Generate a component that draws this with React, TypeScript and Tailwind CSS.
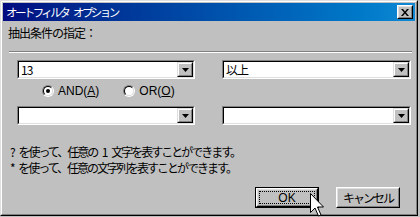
import React from "react";

// ─── Classic Win9x pieces ────────────────────────────────────────────────────

function DropArrow() {
  return (
    <div className="flex h-full w-[16px] items-center justify-center border border-t-[#dfdfdf] border-l-[#dfdfdf] border-r-black border-b-black bg-[#c0c0c0]">
      <div className="flex h-full w-full items-center justify-center border border-t-white border-l-white border-r-[#808080] border-b-[#808080]">
        <svg width="7" height="4" viewBox="0 0 7 4">
          <path d="M0 0h7L3.5 4z" fill="#000" />
        </svg>
      </div>
    </div>
  );
}

function Combo({ value, width }: { value?: string; width: string }) {
  return (
    <div className={`${width} h-[19px] border border-t-[#808080] border-l-[#808080] border-r-white border-b-white`}>
      <div className="flex h-full items-stretch border border-t-black border-l-black border-r-[#dfdfdf] border-b-[#dfdfdf] bg-white">
        <span className="flex-1 pl-[2px] text-[12px] leading-[15px] tracking-[-1px]">{value}</span>
        <DropArrow />
      </div>
    </div>
  );
}

function Radio({ checked, label, mnemonic }: { checked?: boolean; label: string; mnemonic: string }) {
  return (
    <div className="flex items-center gap-[4px]">
      <div className="flex size-[12px] items-center justify-center rounded-full border border-t-[#808080] border-l-[#808080] border-r-white border-b-white">
        <div className="flex size-[10px] items-center justify-center rounded-full border border-t-black border-l-black border-r-[#dfdfdf] border-b-[#dfdfdf] bg-white">
          {checked && <div className="size-[4px] rounded-full bg-black" />}
        </div>
      </div>
      <span className="text-[12px] leading-[12px] font-['Liberation_Sans',sans-serif]">
        {label}(<span className="underline">{mnemonic}</span>)
      </span>
    </div>
  );
}

// ─── Page ─────────────────────────────────────────────────────────────────────

export default function App() {
  return (
    <div className="relative h-[217px] w-[420px] overflow-hidden bg-[#c0c0c0] font-['Noto_Sans_CJK_JP',sans-serif] text-[12px] text-black">
      <div className="h-[216px] w-[418px] border border-t-[#dfdfdf] border-l-[#dfdfdf] border-r-black border-b-black">
        <div className="flex h-full flex-col border border-t-white border-l-white border-r-[#808080] border-b-[#808080] p-px">
          {/* Title bar */}
          <div className="flex h-[18px] items-center justify-between bg-gradient-to-r from-[#000a80] to-[#1088d4] pl-[3px] pr-[2px]">
            <span className="text-[11.5px] leading-[14px] tracking-[-2.6px] [word-spacing:5px] text-white">オートフィルタ オプション</span>
            <div className="h-[14px] w-[16px] border border-t-white border-l-white border-r-black border-b-black bg-[#c0c0c0]">
              <div className="flex h-full w-full items-center justify-center border border-t-[#dfdfdf] border-l-[#dfdfdf] border-r-[#808080] border-b-[#808080]">
                <svg width="8" height="7" viewBox="0 0 8 7">
                  <path d="M0 0h2l2 2.5L6 0h2L5 3.5 8 7H6L4 4.5 2 7H0l3-3.5z" fill="#000" />
                </svg>
              </div>
            </div>
          </div>

          {/* Body */}
          <div className="flex flex-1 flex-col">
            <p className="mt-[5px] pl-[5px] leading-[14px] tracking-[-1px]">抽出条件の指定：</p>

            <div className="mt-[11px] ml-[6px] w-[403px] border-t border-b border-t-[#808080] border-b-white" />

            <div className="mt-[7px] ml-[14px] flex gap-[27px]">
              <Combo value="13" width="w-[178px]" />
              <Combo value="以上" width="w-[189px]" />
            </div>

            <div className="mt-[6px] ml-[39px] flex h-[12px] items-center gap-[24px]">
              <Radio checked label="AND" mnemonic="A" />
              <Radio label="OR" mnemonic="O" />
            </div>

            <div className="mt-[9px] ml-[14px] flex gap-[27px]">
              <Combo width="w-[178px]" />
              <Combo width="w-[189px]" />
            </div>

            <div className="mt-[19px] pl-[7px] leading-[16px] tracking-[-2px] [word-spacing:4px]">
              <p>? を使って、任意の 1 文字を表すことができます。</p>
              <p>* を使って、任意の文字列を表すことができます。</p>
            </div>

            <div className="mt-[11px] ml-[252px] flex gap-[17px]">
              {/* Default button */}
              <div className="h-[21px] w-[64px] border border-black">
                <div className="h-full w-full border border-t-white border-l-white border-r-black border-b-black">
                  <div className="flex h-full w-full items-center justify-center border border-t-[#dfdfdf] border-l-[#dfdfdf] border-r-[#808080] border-b-[#808080] p-px">
                    <div className="flex h-full w-full items-center justify-center border border-dotted border-black font-['Liberation_Sans',sans-serif] leading-none">
                      OK
                    </div>
                  </div>
                </div>
              </div>
              <div className="h-[21px] w-[64px] border border-t-white border-l-white border-r-black border-b-black">
                <div className="flex h-full w-full items-center justify-center border border-t-[#dfdfdf] border-l-[#dfdfdf] border-r-[#808080] border-b-[#808080] leading-none tracking-[-2px]">
                  キャンセル
                </div>
              </div>
            </div>
          </div>
        </div>
      </div>

      {/* Mouse pointer */}
      <svg className="absolute left-[310px] top-[193px]" width="14" height="24" viewBox="0 0 14 24">
        <path d="M0.5 0.5V19.5L5 15L8.5 23L11 22L7.5 14H13.5Z" fill="#fff" stroke="#000" strokeWidth="1" />
      </svg>
    </div>
  );
}
